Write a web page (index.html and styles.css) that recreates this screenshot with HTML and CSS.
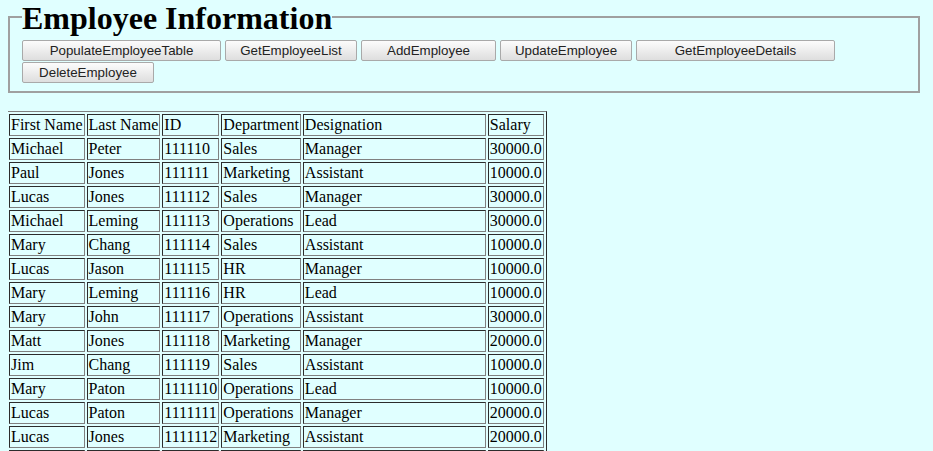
FILE: index.html
```html
<!DOCTYPE html>
<html>
<head>
<meta charset="utf-8">
<title>Employee Information</title>
<link rel="stylesheet" href="styles.css">
</head>
<body>
<fieldset class="panel">
<legend class="panel-title">Employee Information</legend>
<button class="btn btn-wide">PopulateEmployeeTable</button>
<button class="btn">GetEmployeeList</button>
<button class="btn btn-mid">AddEmployee</button>
<button class="btn">UpdateEmployee</button>
<button class="btn btn-wide">GetEmployeeDetails</button>
<button class="btn">DeleteEmployee</button>
</fieldset>
<div class="spacer"></div>
<table class="emp-table">
<tbody>
<tr><td>First Name</td><td>Last Name</td><td>ID</td><td>Department</td><td class="col-desig">Designation</td><td>Salary</td></tr>
<tr><td>Michael</td><td>Peter</td><td>111110</td><td>Sales</td><td>Manager</td><td>30000.0</td></tr>
<tr><td>Paul</td><td>Jones</td><td>111111</td><td>Marketing</td><td>Assistant</td><td>10000.0</td></tr>
<tr><td>Lucas</td><td>Jones</td><td>111112</td><td>Sales</td><td>Manager</td><td>30000.0</td></tr>
<tr><td>Michael</td><td>Leming</td><td>111113</td><td>Operations</td><td>Lead</td><td>30000.0</td></tr>
<tr><td>Mary</td><td>Chang</td><td>111114</td><td>Sales</td><td>Assistant</td><td>10000.0</td></tr>
<tr><td>Lucas</td><td>Jason</td><td>111115</td><td>HR</td><td>Manager</td><td>10000.0</td></tr>
<tr><td>Mary</td><td>Leming</td><td>111116</td><td>HR</td><td>Lead</td><td>10000.0</td></tr>
<tr><td>Mary</td><td>John</td><td>111117</td><td>Operations</td><td>Assistant</td><td>30000.0</td></tr>
<tr><td>Matt</td><td>Jones</td><td>111118</td><td>Marketing</td><td>Manager</td><td>20000.0</td></tr>
<tr><td>Jim</td><td>Chang</td><td>111119</td><td>Sales</td><td>Assistant</td><td>10000.0</td></tr>
<tr><td>Mary</td><td>Paton</td><td>1111110</td><td>Operations</td><td>Lead</td><td>10000.0</td></tr>
<tr><td>Lucas</td><td>Paton</td><td>1111111</td><td>Operations</td><td>Manager</td><td>20000.0</td></tr>
<tr><td>Lucas</td><td>Jones</td><td>1111112</td><td>Marketing</td><td>Assistant</td><td>20000.0</td></tr>
<tr><td>Michael</td><td>Chang</td><td>1111113</td><td>Sales</td><td>Lead</td><td>30000.0</td></tr>
<tr><td>Paul</td><td>Leming</td><td>1111114</td><td>HR</td><td>Manager</td><td>20000.0</td></tr>
</tbody>
</table>
</body>
</html>
```
FILE: styles.css
```css
html {
  background: #e0ffff;
}
body {
  margin: 0 13px 8px 8px;
  font-family: "Liberation Serif", "Times New Roman", serif;
  font-size: 16px;
  color: #000;
}
.panel {
  margin: -4px 0 0 0;
  padding: 3px 12px 7px 12px;
  border: 2px solid #a0a0a0;
}
.panel-title {
  font-size: 32px;
  font-weight: bold;
  padding: 4px 0 0 0;
}
.btn {
  box-sizing: border-box;
  width: 132px;
  height: 21px;
  margin: 0 0 1px 0;
  padding: 0 6px;
  font-family: "Liberation Sans", Arial, sans-serif;
  font-size: 13.33px;
  color: #222;
  background: linear-gradient(#fcfcfc, #dedede);
  border: 1px solid #a9a9a9;
  border-radius: 2px;
  vertical-align: top;
}
.btn-mid {
  width: 135px;
}
.btn-wide {
  width: 199px;
}
.spacer {
  height: 18px;
}
.emp-table {
  margin-left: -2px;
  border: 1px outset #808080;
  border-spacing: 2px;
}
.emp-table td {
  border: 1px inset #808080;
  padding: 1px;
  line-height: 18px;
}
.col-desig {
  width: 179px;
}
```
